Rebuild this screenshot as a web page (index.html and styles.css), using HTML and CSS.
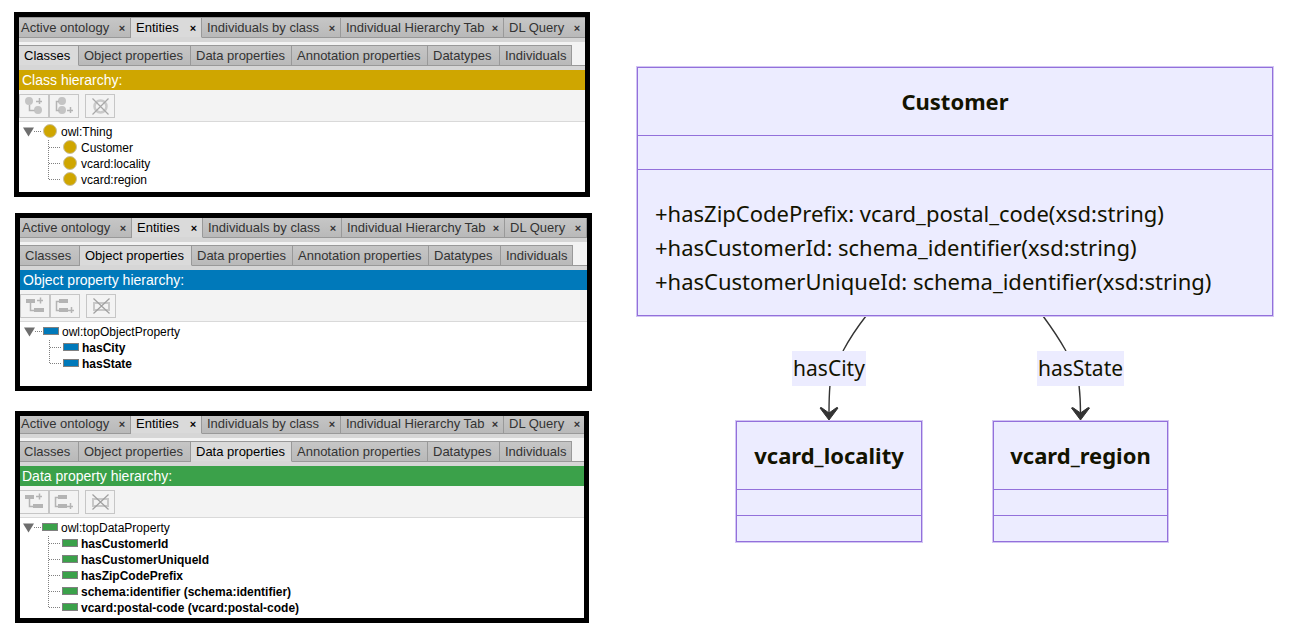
FILE: index.html
```html
<!DOCTYPE html>
<html lang="en">
<head>
<meta charset="utf-8">
<title>Customer ontology</title>
<link rel="stylesheet" href="styles.css">
</head>
<body>
<svg class="sprite" aria-hidden="true">
  <symbol id="root-lead" viewBox="0 0 24 16"><path d="M4 3.500h11l-5.500 9z" fill="#6e6e6e"/><path d="M15 7.500h8" stroke="#808080" stroke-dasharray="1 1" fill="none"/></symbol>
  <symbol id="mid-lead" viewBox="0 0 44 16"><path d="M29.500 0v16M30 7.500h12" stroke="#808080" stroke-dasharray="1 1" fill="none"/></symbol>
  <symbol id="end-lead" viewBox="0 0 44 16"><path d="M29.500 0v8M30 7.500h12" stroke="#808080" stroke-dasharray="1 1" fill="none"/></symbol>
  <symbol id="add-child-class" viewBox="0 0 28 22"><g fill="#c4c4c4"><circle cx="9" cy="6" r="4"/><circle cx="18" cy="15" r="4"/></g><path d="M9.500 10v5.500h5M16 6.500h6M19.500 3v6" stroke="#b4b4b4" stroke-width="1.500" fill="none"/></symbol>
  <symbol id="add-sibling-class" viewBox="0 0 28 22"><g fill="#c4c4c4"><circle cx="12" cy="6" r="4"/><circle cx="12" cy="15" r="4"/></g><path d="M9 6.500h-2.500v9h3M17 15.500h6M20.500 12v6" stroke="#b4b4b4" stroke-width="1.500" fill="none"/></symbol>
  <symbol id="delete-class" viewBox="0 0 28 22"><circle cx="14.500" cy="11.500" r="6" fill="none" stroke="#cacaca" stroke-width="2.500"/><path d="M6.500 3.500l16 16M22.500 3.500l-16 16" stroke="#a8a8a8" stroke-width="1.200"/></symbol>
  <symbol id="add-child-prop" viewBox="0 0 28 22"><g fill="#b4b4b4"><path d="M5 4h9v4H5zM13 13h10v4H13z"/></g><path d="M9.500 8v7.500h4M16 5.500h6M19.500 2.500v6" stroke="#b4b4b4" stroke-width="1.500" fill="none"/></symbol>
  <symbol id="add-sibling-prop" viewBox="0 0 28 22"><g fill="#b4b4b4"><path d="M8 4h9v4H8zM8 13h9v4H8z"/></g><path d="M8 6.500h-2.500v9h3M17 15.500h6M20.500 12v6" stroke="#b4b4b4" stroke-width="1.500" fill="none"/></symbol>
  <symbol id="delete-prop" viewBox="0 0 28 22"><path d="M7 8h15v7H7z" fill="none" stroke="#c8c8c8" stroke-width="2"/><path d="M6.500 3.500l16 15M22.500 3.500l-16 15" stroke="#a0a0a0" stroke-width="1.200"/></symbol>
</svg>
<main class="page">
  <div class="panels">
    <section class="panel panel-class">
      <div class="content">
        <nav class="tabs">
          <div class="tab"><button>Active ontology</button><button class="close" aria-label="Close">×</button></div>
          <div class="tab active"><button>Entities</button><button class="close" aria-label="Close">×</button></div>
          <div class="tab"><button>Individuals by class</button><button class="close" aria-label="Close">×</button></div>
          <div class="tab"><button>Individual Hierarchy Tab</button><button class="close" aria-label="Close">×</button></div>
          <div class="tab"><button>DL Query</button><button class="close" aria-label="Close">×</button></div>
        </nav>
        <nav class="subtabs">
          <button class="subtab active">Classes</button><button class="subtab">Object properties</button><button class="subtab">Data properties</button><button class="subtab">Annotation properties</button><button class="subtab">Datatypes</button><button class="subtab">Individuals</button>
        </nav>
        <h2 class="title">Class hierarchy:</h2>
        <div class="toolbar">
          <button class="tool" aria-label="Add subclass"><svg><use href="#add-child-class"/></svg></button>
          <button class="tool" aria-label="Add sibling class"><svg><use href="#add-sibling-class"/></svg></button>
          <button class="tool remove" aria-label="Delete class"><svg><use href="#delete-class"/></svg></button>
        </div>
        <ul class="tree">
          <li class="root"><svg><use href="#root-lead"/></svg><i class="mark"></i>owl:Thing</li>
          <li><svg><use href="#mid-lead"/></svg><i class="mark"></i>Customer</li>
          <li><svg><use href="#mid-lead"/></svg><i class="mark"></i>vcard:locality</li>
          <li><svg><use href="#end-lead"/></svg><i class="mark"></i>vcard:region</li>
        </ul>
      </div>
    </section>

    <section class="panel panel-object">
      <div class="content">
        <nav class="tabs">
          <div class="tab"><button>Active ontology</button><button class="close" aria-label="Close">×</button></div>
          <div class="tab active"><button>Entities</button><button class="close" aria-label="Close">×</button></div>
          <div class="tab"><button>Individuals by class</button><button class="close" aria-label="Close">×</button></div>
          <div class="tab"><button>Individual Hierarchy Tab</button><button class="close" aria-label="Close">×</button></div>
          <div class="tab"><button>DL Query</button><button class="close" aria-label="Close">×</button></div>
        </nav>
        <nav class="subtabs">
          <button class="subtab">Classes</button><button class="subtab active">Object properties</button><button class="subtab">Data properties</button><button class="subtab">Annotation properties</button><button class="subtab">Datatypes</button><button class="subtab">Individuals</button>
        </nav>
        <h2 class="title">Object property hierarchy:</h2>
        <div class="toolbar">
          <button class="tool" aria-label="Add sub property"><svg><use href="#add-child-prop"/></svg></button>
          <button class="tool" aria-label="Add sibling property"><svg><use href="#add-sibling-prop"/></svg></button>
          <button class="tool remove" aria-label="Delete property"><svg><use href="#delete-prop"/></svg></button>
        </div>
        <ul class="tree">
          <li class="root"><svg><use href="#root-lead"/></svg><i class="mark"></i>owl:topObjectProperty</li>
          <li><svg><use href="#mid-lead"/></svg><i class="mark"></i>hasCity</li>
          <li><svg><use href="#end-lead"/></svg><i class="mark"></i>hasState</li>
        </ul>
      </div>
    </section>

    <section class="panel panel-data">
      <div class="content">
        <nav class="tabs">
          <div class="tab"><button>Active ontology</button><button class="close" aria-label="Close">×</button></div>
          <div class="tab active"><button>Entities</button><button class="close" aria-label="Close">×</button></div>
          <div class="tab"><button>Individuals by class</button><button class="close" aria-label="Close">×</button></div>
          <div class="tab"><button>Individual Hierarchy Tab</button><button class="close" aria-label="Close">×</button></div>
          <div class="tab"><button>DL Query</button><button class="close" aria-label="Close">×</button></div>
        </nav>
        <nav class="subtabs">
          <button class="subtab">Classes</button><button class="subtab">Object properties</button><button class="subtab active">Data properties</button><button class="subtab">Annotation properties</button><button class="subtab">Datatypes</button><button class="subtab">Individuals</button>
        </nav>
        <h2 class="title">Data property hierarchy:</h2>
        <div class="toolbar">
          <button class="tool" aria-label="Add sub property"><svg><use href="#add-child-prop"/></svg></button>
          <button class="tool" aria-label="Add sibling property"><svg><use href="#add-sibling-prop"/></svg></button>
          <button class="tool remove" aria-label="Delete property"><svg><use href="#delete-prop"/></svg></button>
        </div>
        <ul class="tree">
          <li class="root"><svg><use href="#root-lead"/></svg><i class="mark"></i>owl:topDataProperty</li>
          <li><svg><use href="#mid-lead"/></svg><i class="mark"></i>hasCustomerId</li>
          <li><svg><use href="#mid-lead"/></svg><i class="mark"></i>hasCustomerUniqueId</li>
          <li><svg><use href="#mid-lead"/></svg><i class="mark"></i>hasZipCodePrefix</li>
          <li><svg><use href="#mid-lead"/></svg><i class="mark"></i>schema:identifier (schema:identifier)</li>
          <li><svg><use href="#end-lead"/></svg><i class="mark"></i>vcard:postal-code (vcard:postal-code)</li>
        </ul>
      </div>
    </section>
  </div>

  <section class="diagram">
    <div class="canvas">
      <svg class="edges" viewBox="0 0 638 478" aria-hidden="true">
        <g fill="none" stroke="#333" stroke-width="1.400">
          <path d="M230 250Q216 268 207 285M194 319Q193 330 193 348"/>
          <path d="M407 250Q421 269 430 285M443 319Q444.500 332 444.500 348"/>
        </g>
        <path d="M193 354l-9-12q1-1 2 0l7 5 7-5q1-1 2 0zM444.500 354l-9-12q1-1 2 0l7 5 7-5q1-1 2 0z" fill="#333" stroke="#333"/>
      </svg>
      <article class="node customer">
        <h3>Customer</h3>
        <div class="empty"></div>
        <ul>
          <li>+hasZipCodePrefix: vcard_postal_code(xsd:string)</li>
          <li>+hasCustomerId: schema_identifier(xsd:string)</li>
          <li>+hasCustomerUniqueId: schema_identifier(xsd:string)</li>
        </ul>
      </article>
      <span class="edge-label city">hasCity</span>
      <span class="edge-label state">hasState</span>
      <article class="node locality"><h3>vcard_locality</h3><div class="empty"></div><div class="empty"></div></article>
      <article class="node region"><h3>vcard_region</h3><div class="empty"></div><div class="empty"></div></article>
    </div>
  </section>
</main>
</body>
</html>
```

FILE: styles.css
```css
* { box-sizing: border-box; }
body { margin: 0; background: #fff; font-family: "Liberation Sans", Arial, sans-serif; }
button { margin: 0; padding: 0; border: 0; background: none; color: inherit; font: inherit; white-space: nowrap; }
.sprite { display: none; }
.page { display: grid; grid-template-columns: minmax(0, 592fr) minmax(0, 709fr); }

.panels { display: flex; flex-direction: column; padding: 12px 0 16px 14px; }
.panel { border: 5px solid #000; overflow: hidden; }
.panel-class { margin: 0 2px 16px 0; --accent: #cfa600; }
.panel-object { margin: 0 0 20px 1px; --accent: #0079ba; }
.panel-data { margin: 0 3px 0 1px; --accent: #3ba14a; }
.panel-object .content { margin-top: -1px; }
.panel-data .content { margin: -3px 0 0 -1px; }

.tabs { display: grid; grid-template-columns: 112px 71px 139px 163px 82px; height: 25px; background: #d6d6d6; border-bottom: 4px solid #d6d6d6; font-size: 13px; color: #333; }
.tab { display: flex; align-items: center; justify-content: space-between; padding: 0 4px 0 5px; border: solid #999; border-width: 1px 1px 1px 0; background: linear-gradient(#c6c6c6, #b9b9b9); }
.tab:first-child { padding-left: 2px; }
.tab.active { background: #dadada; border-bottom-color: #d6d6d6; color: #000; }
.close { width: 8px; font-size: 11px; font-weight: bold; text-align: center; }

.subtabs { display: grid; grid-template-columns: 60px 112px 101px 136px 72px 72px 1fr; height: 28px; padding-top: 3px; background: linear-gradient(#999, #999) 0 23px / 100% 1px no-repeat, linear-gradient(#f3f3f3 24px, #d6d6d6 24px); padding-bottom: 4px; font-size: 13px; color: #333; }
.subtab { padding-left: 5px; text-align: left; border: solid #999; border-width: 1px 1px 1px 0; background: linear-gradient(#c6c6c6, #b9b9b9); }
.subtab.active { background: #dadada; border-bottom-color: #d6d6d6; color: #000; }

.title { margin: 0; padding-left: 3px; background: var(--accent); color: #fff; font-size: 14px; font-weight: normal; line-height: 20px; }
.toolbar { display: flex; padding: 4px 0 3px; background: #f3f3f3; border-bottom: 1px solid #d9d9d9; }
.tool { width: 30px; height: 24px; border: 1px solid #c6c6c6; }
.tool.remove { margin-left: 6px; }
.tool svg { display: block; width: 28px; height: 22px; }

.tree { margin: 0; padding: 2px 0 4px; list-style: none; font-size: 12px; line-height: 16px; color: #000; }
.tree li { display: flex; align-items: center; height: 16px; white-space: nowrap; font-weight: bold; }
.tree .root, .panel-class .tree li { font-weight: normal; }
.tree svg { width: 44px; height: 16px; }
.tree .root svg { width: 24px; }
.panel-object .tree { padding-bottom: 14px; }
.panel-data .tree { padding-bottom: 2px; }
.mark { width: 16px; height: 8px; margin: 0 3px 2px -1px; border: 1px solid #808080; background: var(--accent); }
.panel-class .mark { width: 14px; height: 14px; margin: 0 4px 2px 0; border-color: #c9c0a0; border-radius: 50%; }

.diagram { padding: 66px 0 0 44px; }
.canvas { position: relative; width: 638px; height: 478px; color: #131300; font-family: "Noto Sans", "Open Sans", sans-serif; font-size: 22px; }
.edges { position: absolute; inset: 0; width: 100%; height: 100%; }
.node { position: absolute; border: 1px solid #9370db; background: #ececff; box-shadow: 0 0 0 1px #d2c5f3; }
.node h3 { margin: 0; font-size: 22px; line-height: 67px; text-align: center; }
.empty { height: 26px; border-top: 1px solid #9370db; }
.customer { left: 1px; top: 1px; width: 636px; height: 249px; }
.customer .empty { height: 34px; }
.customer ul { margin: 0; padding: 26px 17px; border-top: 1px solid #9370db; list-style: none; line-height: 34px; white-space: nowrap; }
.locality { left: 100px; top: 355px; width: 186px; }
.region { left: 357px; top: 355px; width: 175px; }
.edge-label { position: absolute; top: 285px; background: #ececff; font-size: 21px; line-height: 35px; text-align: center; }
.city { left: 156px; width: 74px; }
.state { left: 401px; width: 87px; }
```
